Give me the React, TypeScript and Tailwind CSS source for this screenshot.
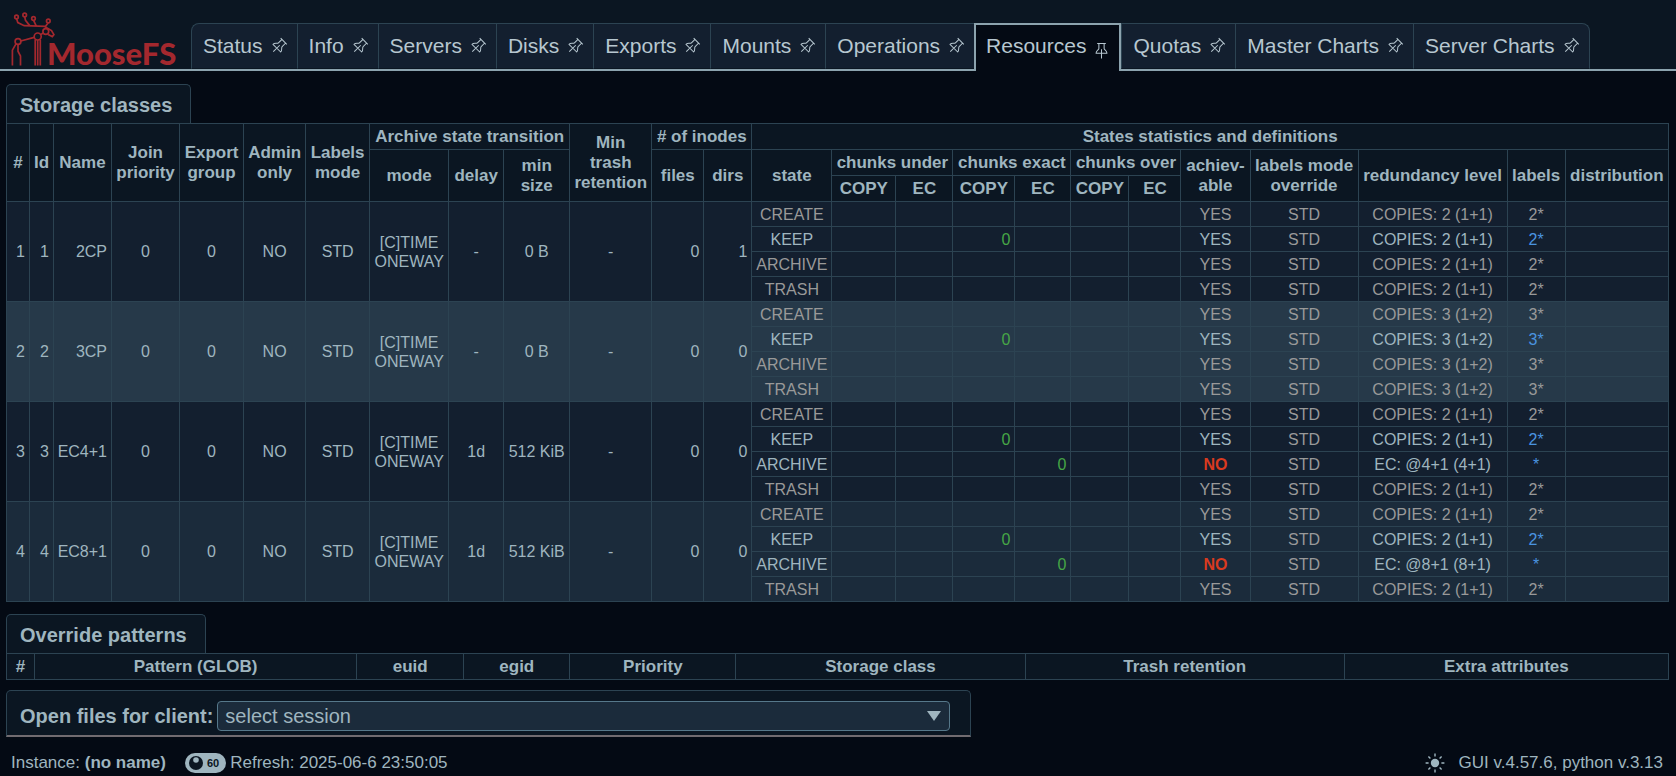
import { Fragment } from "react";

const tabs = [
  "Status",
  "Info",
  "Servers",
  "Disks",
  "Exports",
  "Mounts",
  "Operations",
  "Resources",
  "Quotas",
  "Master Charts",
  "Server Charts",
];

function Pin({ upright = false }: { upright?: boolean }) {
  return (
    <svg
      viewBox="0 0 16 16"
      className={upright ? "mt-2 size-[15px] overflow-visible" : "size-[15px] overflow-visible"}
      fill="none"
      stroke="currentColor"
      strokeWidth="1.1"
      strokeLinejoin="round"
      aria-hidden="true"
    >
      <g transform={upright ? undefined : "rotate(45 8 8) translate(0 -0.5)"}>
        <path d="M3.4 0.6h9.2M5.2 0.8v5c0 1.8-3 2.2-3 5.2h11.6c0-3-3-3.4-3-5.2v-5M8 6.6v9.8" />
      </g>
    </svg>
  );
}

function Logo() {
  return (
    <svg viewBox="0 0 180 60" className="h-[60px] w-[180px] shrink-0 overflow-visible" role="img" aria-label="MooseFS">
      <g fill="none" stroke="#a3282e" strokeWidth="1.7" transform="translate(0 -9)">
        <circle cx="16.5" cy="17" r="1.8" />
        <circle cx="24.7" cy="15" r="1.8" />
        <circle cx="33.5" cy="18.5" r="1.8" />
        <circle cx="48.3" cy="21" r="1.8" />
        <path d="M16.6 18.8l1.2 3.8 6.4 3.1 21.3.6 2.6-3.4M24.7 16.8l.8 3.6 4.2 5.2M33.6 20.3l2.6 5.6M44.5 26.5l7 4 2.4 4.2-1.6 1.9-4.2-2.2" />
        <circle cx="45.8" cy="31.5" r="2.9" />
        <circle cx="37.7" cy="36.5" r="3.5" />
        <circle cx="18" cy="41.5" r="2.9" />
        <path d="M43 33l-2.2 1.6M34.2 37.4L20.8 41M16 43.8l-3.6 6.4v15.3M18 44.4v6.8l2.5 4.8v9.5M35.2 39.4v26.1M37.7 40v25.5M40.3 39.4v26.1" />
      </g>
      <text x="47" y="56" fill="#a3282e" className="font-['Lato','Noto_Sans',sans-serif] text-[31px] font-black">
        MooseFS
      </text>
    </svg>
  );
}

const th = "border border-[#2c4352] p-0 text-[17px] leading-5 font-bold";
const td = "border border-[#2c4352] p-0";

type StorageClass = {
  name: string;
  delay: string;
  size: string;
  dirs: number;
  copies: string;
  labels: string;
  ec?: string;
  row: string;
};

const classes: StorageClass[] = [
  { name: "2CP", delay: "-", size: "0 B", dirs: 1, copies: "COPIES: 2 (1+1)", labels: "2*", row: "bg-[#131f2f]" },
  { name: "3CP", delay: "-", size: "0 B", dirs: 0, copies: "COPIES: 3 (1+2)", labels: "3*", row: "bg-[#263949]" },
  { name: "EC4+1", delay: "1d", size: "512 KiB", dirs: 0, copies: "COPIES: 2 (1+1)", labels: "2*", ec: "EC: @4+1 (4+1)", row: "bg-[#131f2f]" },
  { name: "EC8+1", delay: "1d", size: "512 KiB", dirs: 0, copies: "COPIES: 2 (1+1)", labels: "2*", ec: "EC: @8+1 (8+1)", row: "bg-[#1b2b3b]" },
];

const states = ["CREATE", "KEEP", "ARCHIVE", "TRASH"];

function ClassRows({ item, index }: { item: StorageClass; index: number }) {
  return (
    <>
      {states.map((state, i) => {
        const ecRow = state === "ARCHIVE" && item.ec !== undefined;
        const active = state === "KEEP" || ecRow;
        const tone = active ? "text-[#9fb5bf]" : "text-[#999999]";
        return (
          <tr key={state} className={item.row}>
            {i === 0 && (
              <>
                <td rowSpan={4} className={`${td} pr-1 text-right`}>{index}</td>
                <td rowSpan={4} className={`${td} pr-1 text-right`}>{index}</td>
                <td rowSpan={4} className={`${td} pr-1 text-right`}>{item.name}</td>
                <td rowSpan={4} className={td}>0</td>
                <td rowSpan={4} className={td}>0</td>
                <td rowSpan={4} className={td}>NO</td>
                <td rowSpan={4} className={td}>STD</td>
                <td rowSpan={4} className={td}>[C]TIME<br />ONEWAY</td>
                <td rowSpan={4} className={td}>{item.delay}</td>
                <td rowSpan={4} className={td}>{item.size}</td>
                <td rowSpan={4} className={td}>-</td>
                <td rowSpan={4} className={`${td} pr-1 text-right`}>0</td>
                <td rowSpan={4} className={`${td} pr-1 text-right`}>{item.dirs}</td>
              </>
            )}
            <td className={`${td} h-[25px] ${tone}`}>{state}</td>
            <td className={td} />
            <td className={td} />
            <td className={`${td} pr-1 text-right text-[#46a546]`}>{state === "KEEP" ? "0" : ""}</td>
            <td className={`${td} pr-1 text-right text-[#46a546]`}>{ecRow ? "0" : ""}</td>
            <td className={td} />
            <td className={td} />
            <td className={`${td} ${ecRow ? "font-bold text-[#d93a1f]" : tone}`}>{ecRow ? "NO" : "YES"}</td>
            <td className={`${td} text-[#999999]`}>STD</td>
            <td className={`${td} ${tone}`}>{ecRow ? item.ec : item.copies}</td>
            <td className={`${td} ${active ? "text-[#4a94e0]" : tone}`}>
              {active ? <a href="#labels">{ecRow ? "*" : item.labels}</a> : item.labels}
            </td>
            <td className={td} />
          </tr>
        );
      })}
    </>
  );
}

function SectionTitle({ children }: { children: string }) {
  return (
    <h2 className="w-fit rounded-t-[5px] border border-b-0 border-[#2c4352] bg-[#0b1622] pt-[7px] pr-[18px] pb-[5px] pl-[13px] text-[20px] leading-[26px] font-bold">
      {children}
    </h2>
  );
}

export default function App() {
  return (
    <div className="min-h-screen bg-[#040a14] font-['Liberation_Sans',Arial,sans-serif] text-[16px] text-[#9fb5bf]">
      <header className="flex items-end border-b-2 border-[#8ca3ae] bg-[#0b1622] pt-[9px] pr-2">
        <Logo />
        <nav className="ml-[11px] flex text-[21px] leading-6 whitespace-nowrap text-[#b7c7d0]">
          {tabs.map((tab) =>
            tab === "Resources" ? (
              <a
                key={tab}
                href="#resources"
                aria-current="page"
                className="-mb-[2px] flex h-[48px] items-center gap-2 border-2 border-b-0 border-[#8ca3ae] bg-[#040a14] px-[10px] pb-1"
              >
                {tab}
                <Pin upright />
              </a>
            ) : (
              <a
                key={tab}
                href="#tab"
                className="flex h-[46px] items-center gap-2 border-y border-t-[#2c4352] border-b-[#0b1622] border-l border-l-[#2c4352] bg-[#131f2f] px-[11px] first:rounded-tl-lg last:rounded-tr-lg last:border-r last:border-r-[#2c4352]"
              >
                {tab}
                <Pin />
              </a>
            ),
          )}
        </nav>
      </header>

      <main className="pt-[13px] pr-[7px] pl-[6px] whitespace-nowrap">
        <section>
          <SectionTitle>Storage classes</SectionTitle>
          <table className="w-full table-fixed border-collapse text-center leading-[19px]">
            <colgroup>
              <col className="w-[23px]" />
              <col className="w-[24px]" />
              <col className="w-[58px]" />
              <col className="w-[68px]" />
              <col className="w-[64px]" />
              <col className="w-[62px]" />
              <col className="w-[64px]" />
              <col className="w-[79px]" />
              <col className="w-[55px]" />
              <col className="w-[66px]" />
              <col className="w-[82px]" />
              <col className="w-[52px]" />
              <col className="w-[48px]" />
              <col className="w-[80px]" />
              <col className="w-[64px]" />
              <col className="w-[57px]" />
              <col className="w-[62px]" />
              <col className="w-[56px]" />
              <col className="w-[58px]" />
              <col className="w-[52px]" />
              <col className="w-[69px]" />
              <col className="w-[108px]" />
              <col className="w-[149px]" />
              <col className="w-[58px]" />
              <col className="w-[103px]" />
            </colgroup>
            <thead className="bg-[#0b1622]">
              <tr className="h-[26px]">
                <th rowSpan={3} className={th}>#</th>
                <th rowSpan={3} className={th}>Id</th>
                <th rowSpan={3} className={th}>Name</th>
                <th rowSpan={3} className={th}>Join<br />priority</th>
                <th rowSpan={3} className={th}>Export<br />group</th>
                <th rowSpan={3} className={th}>Admin<br />only</th>
                <th rowSpan={3} className={th}>Labels<br />mode</th>
                <th colSpan={3} className={th}>Archive state transition</th>
                <th rowSpan={3} className={th}>Min<br />trash<br />retention</th>
                <th colSpan={2} className={th}># of inodes</th>
                <th colSpan={12} className={th}>States statistics and definitions</th>
              </tr>
              <tr className="h-[26px]">
                <th rowSpan={2} className={th}>mode</th>
                <th rowSpan={2} className={th}>delay</th>
                <th rowSpan={2} className={th}>min<br />size</th>
                <th rowSpan={2} className={th}>files</th>
                <th rowSpan={2} className={th}>dirs</th>
                <th rowSpan={2} className={th}>state</th>
                <th colSpan={2} className={th}>chunks under</th>
                <th colSpan={2} className={th}>chunks exact</th>
                <th colSpan={2} className={th}>chunks over</th>
                <th rowSpan={2} className={th}>achiev-<br />able</th>
                <th rowSpan={2} className={th}>labels mode<br />override</th>
                <th rowSpan={2} className={th}>redundancy level</th>
                <th rowSpan={2} className={th}>labels</th>
                <th rowSpan={2} className={th}>distribution</th>
              </tr>
              <tr className="h-[26px]">
                {["under", "exact", "over"].map((group) => (
                  <Fragment key={group}>
                    <th className={th}>COPY</th>
                    <th className={th}>EC</th>
                  </Fragment>
                ))}
              </tr>
            </thead>
            <tbody>
              {classes.map((item, i) => (
                <ClassRows key={item.name} item={item} index={i + 1} />
              ))}
            </tbody>
          </table>
        </section>

        <section className="mt-3">
          <SectionTitle>Override patterns</SectionTitle>
          <table className="w-full table-fixed border-collapse text-center">
            <colgroup>
              <col className="w-[28px]" />
              <col className="w-[322px]" />
              <col className="w-[107px]" />
              <col className="w-[106px]" />
              <col className="w-[166px]" />
              <col className="w-[289px]" />
              <col className="w-[319px]" />
              <col className="w-[324px]" />
            </colgroup>
            <thead className="bg-[#0b1622]">
              <tr className="h-[26px]">
                <th className={th}>#</th>
                <th className={th}>Pattern (GLOB)</th>
                <th className={th}>euid</th>
                <th className={th}>egid</th>
                <th className={th}>Priority</th>
                <th className={th}>Storage class</th>
                <th className={th}>Trash retention</th>
                <th className={th}>Extra attributes</th>
              </tr>
            </thead>
          </table>
        </section>

        <form className="mt-[10px] flex w-full max-w-[965px] items-center gap-1 rounded-t-[5px] border border-b-2 border-[#2c4352] border-b-[#716b70] bg-[#0b1622] pt-[10px] pr-5 pb-1 pl-[13px] text-[20px] leading-7">
          <label htmlFor="session" className="font-bold">
            Open files for client:
          </label>
          <div className="relative flex-1">
            <select
              id="session"
              className="block h-[30px] w-full appearance-none rounded-[4px] border border-[#56788a] bg-[#1b2b3b] px-[7px] text-[20px] leading-7"
            >
              <option>select session</option>
            </select>
            <svg viewBox="0 0 14 10" className="pointer-events-none absolute top-[10px] right-[9px] h-[10px] w-[14px]" fill="#9fb5bf" aria-hidden="true">
              <path d="M0 0h14L7 10z" />
            </svg>
          </div>
        </form>
      </main>

      <footer className="flex items-center justify-between pt-[15px] pr-[13px] pl-[11px] text-[17px] leading-[22px] whitespace-nowrap">
        <div className="flex items-center">
          <span>
            Instance: <b>(no name)</b>
          </span>
          <button type="button" aria-label="Refresh every 60 seconds" className="ml-[19px] flex h-5 items-center gap-1 rounded-full bg-[#9fb5bf] pr-[7px] pl-1 text-[11px] font-bold text-[#0b1622]">
            <svg viewBox="0 0 14 14" className="size-[14px]" aria-hidden="true">
              <circle cx="7" cy="7" r="7" fill="#0b1622" />
              <circle cx="7" cy="4" r="2.8" fill="#9fb5bf" />
            </svg>
            60
          </button>
          <span className="ml-1">Refresh: 2025-06-6 23:50:05</span>
        </div>
        <div className="flex items-center gap-[14px]">
          <button type="button" aria-label="Switch theme">
            <svg viewBox="0 0 20 20" className="size-5" fill="none" stroke="#9fb5bf" strokeWidth="1.4" aria-hidden="true">
              <circle cx="10" cy="10" r="4.2" fill="#9fb5bf" stroke="none" />
              <path d="M10 .6v3M10 16.4v3M.6 10h3M16.4 10h3M3.4 3.4l2 2M14.6 14.6l2 2M3.4 16.6l2-2M14.6 5.4l2-2" />
            </svg>
          </button>
          <span>GUI v.4.57.6, python v.3.13</span>
        </div>
      </footer>
    </div>
  );
}
